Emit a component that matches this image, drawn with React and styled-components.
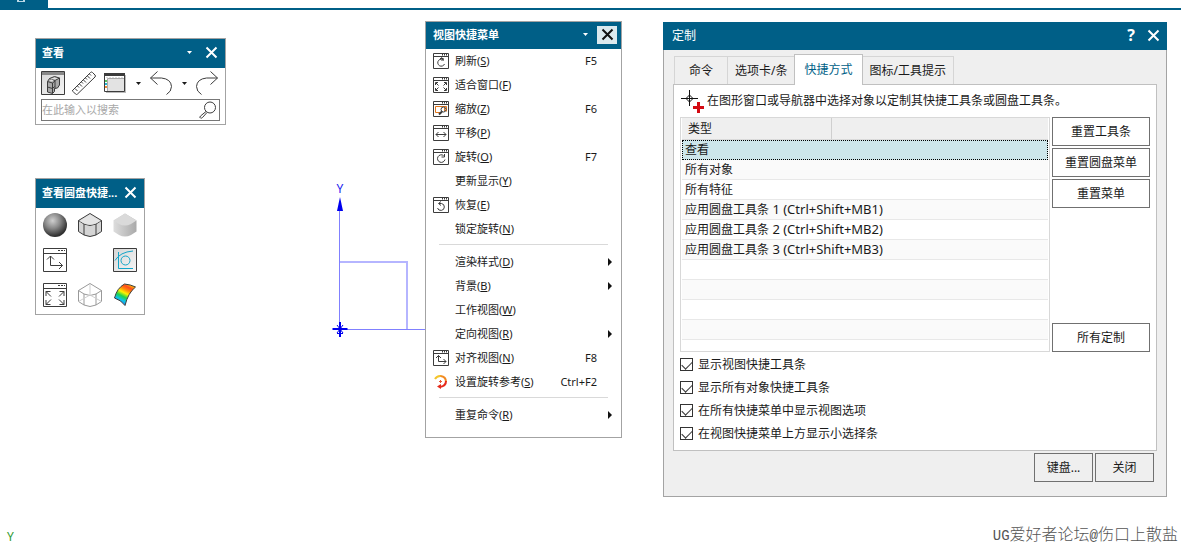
import React, { useState } from 'react'
import styled, { createGlobalStyle, css } from 'styled-components'

const colors = {
  blue: '#005f87',
  frame: '#a3a3a3',
  line: '#c0c0c0',
  text: '#1a1a1a',
  icon: '#3c3c3c',
  face: '#efefef',
  selected: '#cde6eb',
}

const GlobalStyle = createGlobalStyle`
  * {
    box-sizing: border-box;
  }
  body {
    margin: 0;
    background: #ffffff;
    color: ${colors.text};
    font: 12px/20px "Noto Sans", "Noto Sans CJK SC", sans-serif;
  }
  button, input {
    font: inherit;
    color: inherit;
  }
`

const Desktop = styled.main`
  position: relative;
  min-height: 100vh;
  overflow: hidden;
`

const Ribbon = styled.header`
  height: 10px;
  border-bottom: 2px solid ${colors.blue};
`

const RibbonTab = styled.div`
  width: 48px;
  height: 8px;
  background: ${colors.blue};

  svg {
    display: block;
    margin-left: 17px;
  }
`

const Window = styled.section`
  position: absolute;
  left: ${({ $left }) => $left}px;
  top: ${({ $top }) => $top}px;
  min-width: ${({ $width }) => $width}px;
  border: 1px solid ${colors.frame};
  background: #ffffff;
`

const TitleBar = styled.div`
  display: flex;
  align-items: center;
  height: ${({ $compact }) => ($compact ? 27 : 29)}px;
  padding: ${({ $compact }) => ($compact ? '0 4px 2px 7px' : '0 4px 2px 6px')};
  background: ${colors.blue};
  color: #ffffff;
`

const Title = styled.h2`
  flex: 1;
  margin: 0;
  font-size: 11px;
  font-weight: 700;
  white-space: nowrap;
`

const PlainButton = styled.button`
  display: flex;
  align-items: center;
  justify-content: center;
  flex: none;
  width: ${({ $width }) => $width || 24}px;
  height: 24px;
  padding: 0;
  border: 0;
  background: none;
`

const CloseButton = styled(PlainButton)`
  width: 20px;
  height: 18px;
  ${({ $active }) => $active && css`
    background: #dbe9ee;
    color: #111111;
  `}
`

const TitleGap = styled.span`
  width: 4px;
`

/* view toolbar */

const Tools = styled.div`
  display: flex;
  align-items: center;
  padding: 3px 5px 4px;
`

const ToolGap = styled.span`
  width: 7px;
`

const SearchBox = styled.label`
  display: flex;
  align-items: center;
  height: 22px;
  margin: 0 5px 3px;
  padding-right: 2px;
  border: 1px solid #777777;
`

const SearchInput = styled.input`
  flex: 1;
  width: 100px;
  padding: 0;
  border: 0;
  outline: 0;
  background: none;
  font-size: 11px;

  &::placeholder {
    color: #a8a8a8;
  }
`

/* radial toolbar */

const IconGrid = styled.div`
  display: grid;
  grid-template-columns: repeat(3, 24px);
  grid-auto-rows: 24px;
  gap: 11px;
  padding: 5px 7px 7px;
`

/* view menu */

const MenuList = styled.ul`
  margin: 0;
  padding: 0 0 10px;
  list-style: none;
`

const MenuButton = styled.button`
  display: grid;
  grid-template-columns: 16px 1fr auto 12px;
  column-gap: 6px;
  align-items: center;
  width: 100%;
  height: 24px;
  padding: 0 6px 0 7px;
  border: 0;
  background: none;
  font-size: 11px;
  text-align: left;

  u {
    text-underline-offset: 1px;
  }
`

const MenuArrow = styled.span`
  justify-self: end;
  margin-right: 3px;
  border-left: 4px solid #111111;
  border-top: 4px solid transparent;
  border-bottom: 4px solid transparent;
`

const Separator = styled.li`
  height: 9px;
  padding: 3px 13px 0;

  &::before {
    content: "";
    display: block;
    border-top: 1px solid #d9d9d9;
  }
`

/* customize dialog */

const Dialog = styled.section`
  position: absolute;
  left: 663px;
  right: 14px;
  top: 22px;
  border: 1px solid ${colors.frame};
  border-top: 0;
  background: ${colors.face};
`

const DialogTitle = styled.div`
  display: flex;
  align-items: center;
  height: 28px;
  margin: 0 -1px;
  padding: 0 2px 2px 9px;
  background: ${colors.blue};
  color: #ffffff;

  h2 {
    flex: 1;
    margin: 0;
    padding-top: 2px;
    font-size: 12px;
    font-weight: 400;
  }
`

const HelpButton = styled(PlainButton)`
  font-size: 16px;
  font-weight: 700;
`

const DialogBody = styled.div`
  padding: 4px 9px 0;
`

const TabList = styled.div`
  display: flex;
  align-items: flex-end;
  padding-left: 1px;
`

const Tab = styled.button`
  height: 28px;
  padding: 0 ${({ $first }) => ($first ? 14 : 7)}px;
  border: 1px solid #d5d5d5;
  border-bottom: 0;
  border-left-width: ${({ $first }) => ($first ? 1 : 0)}px;
  background: ${colors.face};
  white-space: nowrap;

  &[aria-selected="true"] {
    z-index: 1;
    height: 31px;
    margin-bottom: -1px;
    margin-left: -1px;
    padding: 0 9px;
    border-color: ${colors.line};
    border-left-width: 1px;
    background: #ffffff;
    color: ${colors.blue};
  }
`

const Panel = styled.div`
  padding: 0 6px 5px;
  border: 1px solid ${colors.line};
  background: #ffffff;
`

const Hint = styled.p`
  display: flex;
  align-items: center;
  gap: 2px;
  height: 32px;
  margin: 0;
  white-space: nowrap;
`

const Columns = styled.div`
  display: flex;
  gap: 2px;
  margin-bottom: 1px;
`

const ListFrame = styled.div`
  flex: 1;
  padding: 0 1px;
  border: 1px solid #d8d8d8;
`

const Table = styled.table`
  width: 100%;
  table-layout: fixed;
  border-spacing: 0;

  th {
    height: 22px;
    padding: 0 6px;
    border-bottom: 1px solid #dadada;
    background: ${colors.face};
    font-weight: 400;
    text-align: left;
  }
  th:first-child {
    width: 150px;
    border-right: 1px solid #cfcfcf;
  }
`

const Row = styled.tr`
  background: ${({ $odd }) => ($odd ? '#fafafa' : '#ffffff')};

  td {
    height: 20px;
    padding: 0 3px;
    border-bottom: 1px solid #e8e8e8;
    line-height: 19px;
    white-space: nowrap;
  }
  ${({ $selected }) => $selected && css`
    background: ${colors.selected};

    td {
      padding: 0 2px;
      border: 1px dotted #000000;
      line-height: 18px;
    }
  `}
  ${({ $last }) => $last && css`
    td {
      height: 11px;
      border: 0;
      line-height: 1px;
    }
  `}
`

const KeyCombo = styled.span`
  font-size: 13px;
  line-height: 1;
`

const SideButtons = styled.div`
  display: flex;
  flex-direction: column;
  gap: 2px;
  width: 98px;
`

const PushButton = styled.button`
  width: ${({ $small }) => ($small ? '59px' : '100%')};
  height: 29px;
  padding: 0;
  border: 1px solid #707070;
  background: ${({ $small }) => ($small ? colors.face : '#ffffff')};

  &:last-child {
    margin-top: auto;
  }
`

const CheckLabel = styled.label`
  display: flex;
  align-items: center;
  gap: 5px;
  height: 23px;
`

const CheckInput = styled.input`
  appearance: none;
  width: 13px;
  height: 13px;
  margin: 0;
  border: 1px solid #333333;
  background: #ffffff;

  &:checked::before {
    content: "";
    display: block;
    width: 9px;
    height: 5px;
    margin: 2px 0 0 1px;
    border-left: 1px solid #333333;
    border-bottom: 1px solid #333333;
    transform: rotate(-45deg);
  }
`

const Footer = styled.div`
  display: flex;
  justify-content: flex-end;
  gap: 2px;
  padding: 2px 12px 14px;
`

/* canvas */

const Axes = styled.svg`
  position: absolute;
  left: 330px;
  top: 180px;
`

const CanvasLabel = styled.span`
  position: absolute;
  left: 7px;
  bottom: 0;
  font-size: 12px;
  line-height: 18px;
  color: #2f9a2f;
`

const Signature = styled.span`
  position: absolute;
  right: 3px;
  bottom: 0;
  font: 300 16px/20px "Noto Sans CJK SC", sans-serif;
  color: #555555;
  white-space: nowrap;
`

const Latin = styled.span`
  font-family: "Liberation Mono", monospace;
  font-size: 14px;
`

const Svg = ({ size = 24, children }) => (
  <svg width={size} height={size} viewBox={`0 0 ${size} ${size}`} fill="none" stroke={colors.icon} aria-hidden="true">
    {children}
  </svg>
)

const Cross = () => (
  <svg width="13" height="13" viewBox="0 0 13 13" fill="none" stroke="currentColor" strokeWidth="2" aria-hidden="true">
    <path d="M1.5 1.5l10 10M11.5 1.5l-10 10" />
  </svg>
)

const Caret = () => (
  <svg width="5" height="3" viewBox="0 0 5 3" fill="currentColor" aria-hidden="true">
    <path d="M0 0h5L2.5 3z" />
  </svg>
)

const Frame24 = () => (
  <>
    <path d="M.5.5h23v23H.5zM.5 5.5h23" />
    <path d="M15 2.5h2M18 2.5h2M21 2.5h1" />
  </>
)

const Frame16 = () => (
  <>
    <path d="M.5.5h15v15H.5zM.5 3.5h15" />
    <path d="M9 1.5h1M11 1.5h1M13 1.5h1" strokeWidth="2" />
  </>
)

const ShadedViewIcon = () => (
  <Svg>
    <defs>
      <linearGradient id="tile" x2="1" y2="1">
        <stop stopColor="#d6d6d6" />
        <stop offset="1" stopColor="#f6f6f6" />
      </linearGradient>
    </defs>
    <path d="M.5.5h23v23H.5z" fill="url(#tile)" />
    <path d="M1 1h22v3H1z" fill="#888888" stroke="none" />
    <path d="M6.500 10.500l2-3 5-2 5 1.500v7l-2 3-3 .500v3l-2 2-5-1.500z" fill="#a9a9a9" />
    <path d="M6.500 10.500l5 1.500v10.500M11.500 12l2.500-2v7.500M8.500 7.500l5.500 2 4.500-2.500M6.500 16l5 1.500 2-2" />
    <path d="M9 8l4.500-1.500 3.500 1-3 1zM8 10l2.500-1.500 2 1-1.500 1z" fill="#e1e1e1" stroke="none" />
  </Svg>
)

const RulerIcon = () => (
  <Svg>
    <path d="M.5 19.500L18.500 1.500q1-1 2 0l2.500 2.500q1 1 0 2L5.500 23q-1 1-2 0L1 20.500q-1-1 0-1.500z" />
    <path d="M3 17.500l2.500 2.500M5.500 15l1.500 1.500M7.500 13l2.500 2.500M9.500 11l1.500 1.500M11.500 9l2.500 2.500M13.500 7l1.500 1.500M15.500 5l2.500 2.500M17.500 3l1.500 1.500" />
  </Svg>
)

const LayoutIcon = () => (
  <Svg>
    <path d="M3 4h20v18H3z" fill="#bbbbbb" stroke="none" />
    <path d="M1.500 2.500h20v18h-20z" fill="#ffffff" />
    <path d="M1 2h21v3H1z" fill={colors.icon} stroke="none" />
    <path d="M5 8h16v12H5z" fill="#e3e3e3" stroke="none" />
    <path d="M4.500 7.500v12.500M4.500 7.500H21" stroke="#aaaaaa" />
    <path d="M3 6.500h18" stroke="#dddddd" strokeDasharray="2 1" />
    <path d="M3 9v2" stroke="#58c35d" strokeWidth="2" />
    <path d="M3 12v2" stroke="#25b3d1" strokeWidth="2" />
    <path d="M3 15v2" stroke="#f28c3a" strokeWidth="2" />
  </Svg>
)

const UndoIcon = () => (
  <Svg>
    <path d="M8.500.5L1.500 7l7 6.500M1.500 7h11q9.500 1 10 8.500 0 5-5 8" />
  </Svg>
)

const RedoIcon = () => (
  <Svg>
    <path d="M15.500.5l7 6.500-7 6.500M22.500 7h-11q-9.500 1-10 8.500 0 5 5 8" />
  </Svg>
)

const SearchIcon = () => (
  <svg width="18" height="18" viewBox="0 0 18 18" fill="none" stroke={colors.icon} aria-hidden="true">
    <circle cx="11" cy="6.500" r="5.500" />
    <path d="M7 10.500l-5.500 4.500q-1.500 1.500 0 2 1 .500 2-.500L8 11.500" />
  </svg>
)

const SphereIcon = () => (
  <Svg>
    <defs>
      <radialGradient id="sphere" cx=".4" cy=".32" r=".65">
        <stop stopColor="#cfcfcf" />
        <stop offset=".5" stopColor="#888888" />
        <stop offset="1" stopColor="#303030" />
      </radialGradient>
    </defs>
    <circle cx="12" cy="12" r="12" fill="url(#sphere)" stroke="none" />
  </Svg>
)

const solidOutline = 'M.5 7.500L12 .5 23.500 7.500v11L18 22Q12 25 6 22L.5 18.500z'

const EdgeSolidIcon = () => (
  <Svg>
    <path d={solidOutline} fill="#d4d4d4" />
    <path d="M.5 7.500L6 11q6 3 12 0l5.500-3.500M6 11v11M18 11v11" />
    <path d="M1.500 8L12 1.500 22.500 8 18 10.500q-6 2.500-12 0z" fill="#e4e4e4" stroke="none" />
  </Svg>
)

const SolidIcon = () => (
  <Svg>
    <defs>
      <linearGradient id="solid">
        <stop stopColor="#dddddd" />
        <stop offset="1" stopColor="#a9a9a9" />
      </linearGradient>
    </defs>
    <path d={solidOutline} fill="url(#solid)" stroke="none" />
    <path d="M.5 7.500L12 .5 23.500 7.500 18 11q-6 3-12 0z" fill="#dadada" stroke="none" />
  </Svg>
)

const WireIcon = () => (
  <Svg>
    <g stroke="#999999">
      <path d={solidOutline} />
      <path d="M.5 7.500L6 11q6 3 12 0l5.500-3.500M6 11v11M18 11v11" />
      <path d="M12 1v11M.5 18.500L12 12l11.500 6.500" stroke="#cfcfcf" />
    </g>
  </Svg>
)

const OrientIcon = () => (
  <Svg>
    <Frame24 />
    <path d="M7.500 8v9.500h12M4 11.500l3.500-3.500 3.500 3.500M16 14l3.500 3.500L16 21" />
  </Svg>
)

const FitIcon = () => (
  <Svg>
    <Frame24 />
    <path d="M3 13V8.500h4.500M3 8.500l5 5M21 13V8.500h-4.500M21 8.500l-5 5M3 17v4.500h4.500M3 21.500l5-5M21 17v4.500h-4.500M21 21.500l-5-5" />
  </Svg>
)

const SketchIcon = () => (
  <Svg>
    <path d="M.5.5h23v23H.5z" fill="url(#tile)" />
    <g stroke="#12a5c9">
      <circle cx="12.500" cy="12.500" r="4.500" />
      <path d="M5.500 4v16.500H20M2 12.500Q7 4 20 3" />
    </g>
  </Svg>
)

const RainbowIcon = () => (
  <Svg>
    <defs>
      <linearGradient id="rainbow" x1=".75" y1="0" x2=".25" y2="1">
        <stop stopColor="#ffd800" />
        <stop offset=".16" stopColor="#ff4a1c" />
        <stop offset=".3" stopColor="#ff8d0a" />
        <stop offset=".44" stopColor="#fff200" />
        <stop offset=".6" stopColor="#1ed44a" />
        <stop offset=".76" stopColor="#0fc4ee" />
        <stop offset="1" stopColor="#1745db" />
      </linearGradient>
    </defs>
    <path d="M1.500 15Q4 5 11.500 1q6 .5 11 3Q15 10 12 22.500 8 17 1.500 15z" fill="url(#rainbow)" />
  </Svg>
)

const RefreshIcon = () => (
  <Svg size={16}>
    <Frame16 />
    <path d="M11 7.500A3.500 3.500 0 1 0 11.500 11M7 5.500h3.500M8 4.500l2.500 1.500-2 2" />
  </Svg>
)

const RotateIcon = () => (
  <Svg size={16}>
    <Frame16 />
    <path d="M10.500 6.500A3.800 3.800 0 1 0 12 10.500M11.500 5v3h-3" />
  </Svg>
)

const RestoreIcon = () => (
  <Svg size={16}>
    <Frame16 />
    <path d="M6 6.500h2.500A3.500 3.500 0 1 1 4.500 11M8 4.500l-2.500 2 2.500 2" />
  </Svg>
)

const FitWindowIcon = () => (
  <Svg size={16}>
    <Frame16 />
    <path d="M2.500 8V5.500H5M3 6l2.500 2.500M13.500 8V5.500H11M13 6l-2.500 2.500M2.500 11v2.500H5M3 13l2.500-2.500M13.500 11v2.500H11M13 13l-2.500-2.500" />
  </Svg>
)

const ZoomIcon = () => (
  <Svg size={16}>
    <Frame16 />
    <path d="M8 11.500H2.500v-6h11v5" stroke="#e2761b" />
    <circle cx="10.500" cy="8.500" r="2.500" fill="#ffffff" />
    <path d="M9 10.500l-3 3" strokeWidth="2" />
    <path d="M11.500 7v3" stroke="#e2761b" />
  </Svg>
)

const PanIcon = () => (
  <Svg size={16}>
    <Frame16 />
    <path d="M3 9.500h10M5.500 7L3 9.500 5.500 12M10.500 7L13 9.500 10.500 12" />
  </Svg>
)

const AlignIcon = () => (
  <Svg size={16}>
    <Frame16 />
    <path d="M5.500 5.500v6H13M3 8l2.500-2.500L8 8M10.500 9l2.500 2.500-2.500 2.500" />
  </Svg>
)

const RotationRefIcon = () => (
  <Svg size={16}>
    <path d="M2 5Q4 1.500 8 2" stroke="#f4c52b" strokeWidth="2" />
    <path d="M7.500 2Q13 2.500 13 8" stroke="#f18a22" strokeWidth="2" />
    <path d="M13 7q0 5-6 6" stroke="#e62a1b" strokeWidth="2" />
    <path d="M8 10v5L4 12.500z" fill="#e62a1b" stroke="none" />
    <path d="M6 7.500h3M7.500 6v3" stroke="#e65a36" />
  </Svg>
)

const PickIcon = () => (
  <svg width="25" height="24" viewBox="0 0 25 24" fill="none" stroke="#111111" aria-hidden="true">
    <path d="M1 9.500h17M9.500 1v16" />
    <path d="M9.500 6l3.500 3.500-3.500 3.500L6 9.500z" />
    <path d="M13 18.500h11M18.500 13v11" stroke="#d40a12" strokeWidth="3" />
  </svg>
)

const viewMenu = [
  { label: '刷新', hotkey: 'S', shortcut: 'F5', icon: RefreshIcon },
  { label: '适合窗口', hotkey: 'F', icon: FitWindowIcon },
  { label: '缩放', hotkey: 'Z', shortcut: 'F6', icon: ZoomIcon },
  { label: '平移', hotkey: 'P', icon: PanIcon },
  { label: '旋转', hotkey: 'O', shortcut: 'F7', icon: RotateIcon },
  { label: '更新显示', hotkey: 'Y' },
  { label: '恢复', hotkey: 'E', icon: RestoreIcon },
  { label: '锁定旋转', hotkey: 'N' },
  null,
  { label: '渲染样式', hotkey: 'D', submenu: true },
  { label: '背景', hotkey: 'B', submenu: true },
  { label: '工作视图', hotkey: 'W' },
  { label: '定向视图', hotkey: 'R', submenu: true },
  { label: '对齐视图', hotkey: 'N', shortcut: 'F8', icon: AlignIcon },
  { label: '设置旋转参考', hotkey: 'S', shortcut: 'Ctrl+F2', icon: RotationRefIcon },
  null,
  { label: '重复命令', hotkey: 'R', submenu: true },
]

const tabs = ['命令', '选项卡/条', '快捷方式', '图标/工具提示']

const types = [
  { name: '查看' },
  { name: '所有对象' },
  { name: '所有特征' },
  { name: '应用圆盘工具条', keys: '1 (Ctrl+Shift+MB1)' },
  { name: '应用圆盘工具条', keys: '2 (Ctrl+Shift+MB2)' },
  { name: '应用圆盘工具条', keys: '3 (Ctrl+Shift+MB3)' },
  {}, {}, {}, {}, {},
]

const options = [
  '显示视图快捷工具条',
  '显示所有对象快捷工具条',
  '在所有快捷菜单中显示视图选项',
  '在视图快捷菜单上方显示小选择条',
]

function ViewToolbar() {
  return (
    <Window $left={35} $top={38} $width={191}>
      <TitleBar>
        <Title>查看</Title>
        <PlainButton $width={16} aria-label="选项"><Caret /></PlainButton>
        <TitleGap />
        <CloseButton aria-label="关闭"><Cross /></CloseButton>
      </TitleBar>
      <Tools>
        <PlainButton aria-label="着色"><ShadedViewIcon /></PlainButton>
        <ToolGap />
        <PlainButton aria-label="测量"><RulerIcon /></PlainButton>
        <ToolGap />
        <PlainButton aria-label="布局"><LayoutIcon /></PlainButton>
        <PlainButton $width={22} aria-label="更多布局"><Caret /></PlainButton>
        <PlainButton aria-label="撤消"><UndoIcon /></PlainButton>
        <PlainButton $width={22} aria-label="更多撤消"><Caret /></PlainButton>
        <PlainButton aria-label="重做"><RedoIcon /></PlainButton>
      </Tools>
      <SearchBox>
        <SearchInput placeholder="在此输入以搜索" aria-label="搜索" />
        <SearchIcon />
      </SearchBox>
    </Window>
  )
}

function RadialToolbar() {
  return (
    <Window $left={35} $top={178} $width={110}>
      <TitleBar>
        <Title>查看圆盘快捷...</Title>
        <CloseButton aria-label="关闭"><Cross /></CloseButton>
      </TitleBar>
      <IconGrid>
        <PlainButton aria-label="着色"><SphereIcon /></PlainButton>
        <PlainButton aria-label="带边着色"><EdgeSolidIcon /></PlainButton>
        <PlainButton aria-label="实体"><SolidIcon /></PlainButton>
        <PlainButton aria-label="定向视图"><OrientIcon /></PlainButton>
        <span />
        <PlainButton aria-label="草图"><SketchIcon /></PlainButton>
        <PlainButton aria-label="适合窗口"><FitIcon /></PlainButton>
        <PlainButton aria-label="线框"><WireIcon /></PlainButton>
        <PlainButton aria-label="面分析"><RainbowIcon /></PlainButton>
      </IconGrid>
    </Window>
  )
}

function ViewMenu() {
  return (
    <Window $left={425} $top={21} $width={197}>
      <TitleBar $compact>
        <Title>视图快捷菜单</Title>
        <PlainButton $width={16} aria-label="选项"><Caret /></PlainButton>
        <TitleGap />
        <CloseButton $active aria-label="关闭"><Cross /></CloseButton>
      </TitleBar>
      <MenuList>
        {viewMenu.map((item, i) => {
          if (!item) return <Separator key={i} role="separator" />
          const Icon = item.icon
          return (
            <li key={i}>
              <MenuButton>
                {Icon ? <Icon /> : <span />}
                <span>{item.label}(<u>{item.hotkey}</u>)</span>
                <span>{item.shortcut}</span>
                {item.submenu && <MenuArrow />}
              </MenuButton>
            </li>
          )
        })}
      </MenuList>
    </Window>
  )
}

function CustomizeDialog() {
  const [tab, setTab] = useState(2)
  const [selected, setSelected] = useState(0)

  return (
    <Dialog role="dialog" aria-labelledby="customize-title">
      <DialogTitle>
        <h2 id="customize-title">定制</h2>
        <HelpButton $width={20} aria-label="帮助">?</HelpButton>
        <PlainButton aria-label="关闭"><Cross /></PlainButton>
      </DialogTitle>
      <DialogBody>
        <TabList role="tablist">
          {tabs.map((name, i) => (
            <Tab key={name} role="tab" $first={i === 0} aria-selected={i === tab} onClick={() => setTab(i)}>
              {name}
            </Tab>
          ))}
        </TabList>
        <Panel role="tabpanel">
          <Hint>
            <PickIcon />
            在图形窗口或导航器中选择对象以定制其快捷工具条或圆盘工具条。
          </Hint>
          <Columns>
            <ListFrame>
              <Table>
                <thead>
                  <tr><th>类型</th><th /></tr>
                </thead>
                <tbody>
                  {types.map(({ name, keys }, i) => (
                    <Row
                      key={i}
                      $odd={i % 2 === 1}
                      $selected={i === selected}
                      $last={i === types.length - 1}
                      onClick={() => name && setSelected(i)}
                    >
                      <td colSpan={2}>{name}{keys && <KeyCombo> {keys}</KeyCombo>}</td>
                    </Row>
                  ))}
                </tbody>
              </Table>
            </ListFrame>
            <SideButtons>
              <PushButton>重置工具条</PushButton>
              <PushButton>重置圆盘菜单</PushButton>
              <PushButton>重置菜单</PushButton>
              <PushButton>所有定制</PushButton>
            </SideButtons>
          </Columns>
          {options.map((option) => (
            <CheckLabel key={option}>
              <CheckInput type="checkbox" defaultChecked />
              {option}
            </CheckLabel>
          ))}
        </Panel>
      </DialogBody>
      <Footer>
        <PushButton $small>键盘...</PushButton>
        <PushButton $small>关闭</PushButton>
      </Footer>
    </Dialog>
  )
}

function SketchAxes() {
  return (
    <Axes width="96" height="160" viewBox="0 0 96 160" fill="none" stroke="#8080ff">
      <path d="M10 82h67v67" stroke="#b5b5ff" strokeWidth="2" />
      <path d="M9.500 30v119.500H96" />
      <path d="M10 17l3 14H7z" fill="#0000ee" stroke="none" />
      <path d="M2.500 149h15M10 142v15" stroke="#0000ee" strokeWidth="2" />
      <path d="M7 145l6 8M13 145l-6 8M7 153.500h6" stroke="#0000ee" />
      <text x="10" y="13" textAnchor="middle" fontSize="12" fill="#2222ee" stroke="none">Y</text>
    </Axes>
  )
}

export default function App() {
  return (
    <>
      <GlobalStyle />
      <Desktop>
        <Ribbon>
          <RibbonTab>
            <svg width="8" height="2" aria-hidden="true">
              <path d="M0 0h8v2H0z" fill="#b9d8e6" />
              <path d="M2 0h4v1H2z" fill={colors.blue} />
            </svg>
          </RibbonTab>
        </Ribbon>
        <SketchAxes />
        <ViewToolbar />
        <RadialToolbar />
        <ViewMenu />
        <CustomizeDialog />
        <CanvasLabel>Y</CanvasLabel>
        <Signature><Latin>UG</Latin>爱好者论坛<Latin>@</Latin>伤口上散盐</Signature>
      </Desktop>
    </>
  )
}
